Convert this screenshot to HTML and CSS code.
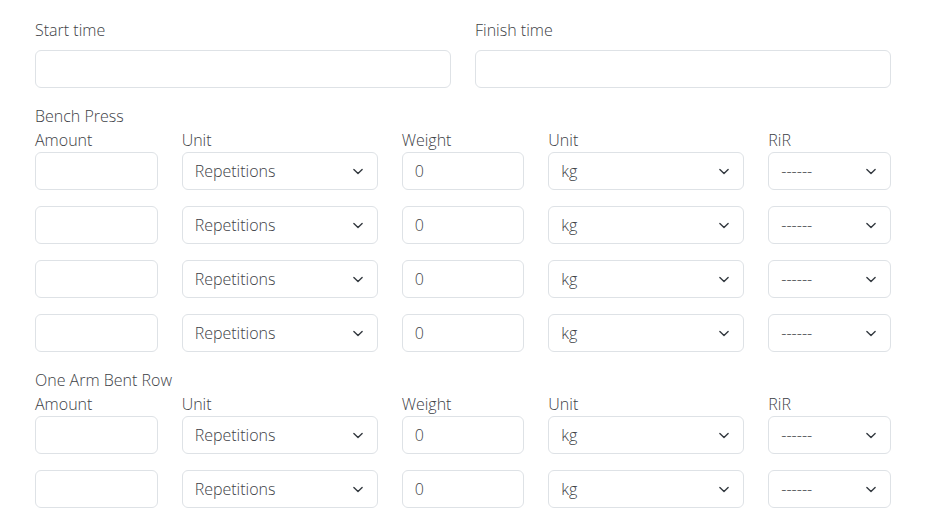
FILE: index.html
```html
<!DOCTYPE html>
<html>
<head>
<meta charset="utf-8">
<link rel="stylesheet" href="styles.css">
</head>
<body>
<form class="page">
  <div class="times">
    <div class="field">
      <label class="form-label">Start time</label>
      <input class="control" type="text">
    </div>
    <div class="field">
      <label class="form-label">Finish time</label>
      <input class="control" type="text">
    </div>
  </div>

  <section class="exercise">
    <div class="ex-name">Bench Press</div>
    <div class="set-grid">
      <div class="lbl">Amount</div><div class="lbl">Unit</div><div class="lbl">Weight</div><div class="lbl">Unit</div><div class="lbl">RiR</div>

      <input class="control" type="text">
      <select class="control select"><option>Repetitions</option></select>
      <input class="control" type="text" value="0">
      <select class="control select"><option>kg</option></select>
      <select class="control select"><option>------</option></select>

      <input class="control gap" type="text">
      <select class="control select gap"><option>Repetitions</option></select>
      <input class="control gap" type="text" value="0">
      <select class="control select gap"><option>kg</option></select>
      <select class="control select gap"><option>------</option></select>

      <input class="control gap" type="text">
      <select class="control select gap"><option>Repetitions</option></select>
      <input class="control gap" type="text" value="0">
      <select class="control select gap"><option>kg</option></select>
      <select class="control select gap"><option>------</option></select>

      <input class="control gap" type="text">
      <select class="control select gap"><option>Repetitions</option></select>
      <input class="control gap" type="text" value="0">
      <select class="control select gap"><option>kg</option></select>
      <select class="control select gap"><option>------</option></select>
    </div>
  </section>

  <section class="exercise">
    <div class="ex-name">One Arm Bent Row</div>
    <div class="set-grid">
      <div class="lbl">Amount</div><div class="lbl">Unit</div><div class="lbl">Weight</div><div class="lbl">Unit</div><div class="lbl">RiR</div>

      <input class="control" type="text">
      <select class="control select"><option>Repetitions</option></select>
      <input class="control" type="text" value="0">
      <select class="control select"><option>kg</option></select>
      <select class="control select"><option>------</option></select>

      <input class="control gap" type="text">
      <select class="control select gap"><option>Repetitions</option></select>
      <input class="control gap" type="text" value="0">
      <select class="control select gap"><option>kg</option></select>
      <select class="control select gap"><option>------</option></select>
    </div>
  </section>
</form>
</body>
</html>
```
FILE: styles.css
```css
* { box-sizing: border-box; }
html, body { margin: 0; padding: 0; background: #fff; }
body {
  font-family: "Open Sans", "Liberation Sans", sans-serif;
  font-size: 16px;
  font-weight: 300;
  line-height: 24px;
  color: #3d4146;
}
.page {
  width: 856px;
  margin-left: 35px;
  padding-top: 18px;
}
.times {
  display: grid;
  grid-template-columns: 1fr 1fr;
  column-gap: 24px;
}
.form-label {
  display: block;
  margin-bottom: 8px;
}
.control {
  display: block;
  width: 100%;
  height: 38px;
  padding: 6px 12px;
  font-family: inherit;
  font-size: 16px;
  font-weight: 300;
  line-height: 24px;
  color: #3d4146;
  background-color: #fff;
  border: 1px solid #dee2e6;
  border-radius: 6px;
  outline: none;
  margin: 0;
}
.select {
  appearance: none;
  -webkit-appearance: none;
  padding-right: 36px;
  background-image: url("data:image/svg+xml,%3csvg xmlns='http://www.w3.org/2000/svg' viewBox='0 0 16 16'%3e%3cpath fill='none' stroke='%23343a40' stroke-linecap='round' stroke-linejoin='round' stroke-width='2' d='m2 5 6 6 6-6'/%3e%3c/svg%3e");
  background-repeat: no-repeat;
  background-position: right 12px center;
  background-size: 14px 11px;
}
.exercise {
  margin-top: 16px;
}
.set-grid {
  --c2: calc((100% + 24px) / 6 - 24px);
  --c3: calc((100% + 24px) / 4 - 24px);
  display: grid;
  grid-template-columns: var(--c2) var(--c3) var(--c2) var(--c3) var(--c2);
  column-gap: 24px;
}
.set-grid > * { min-width: 0; }
.gap { margin-top: 16px; }
```
